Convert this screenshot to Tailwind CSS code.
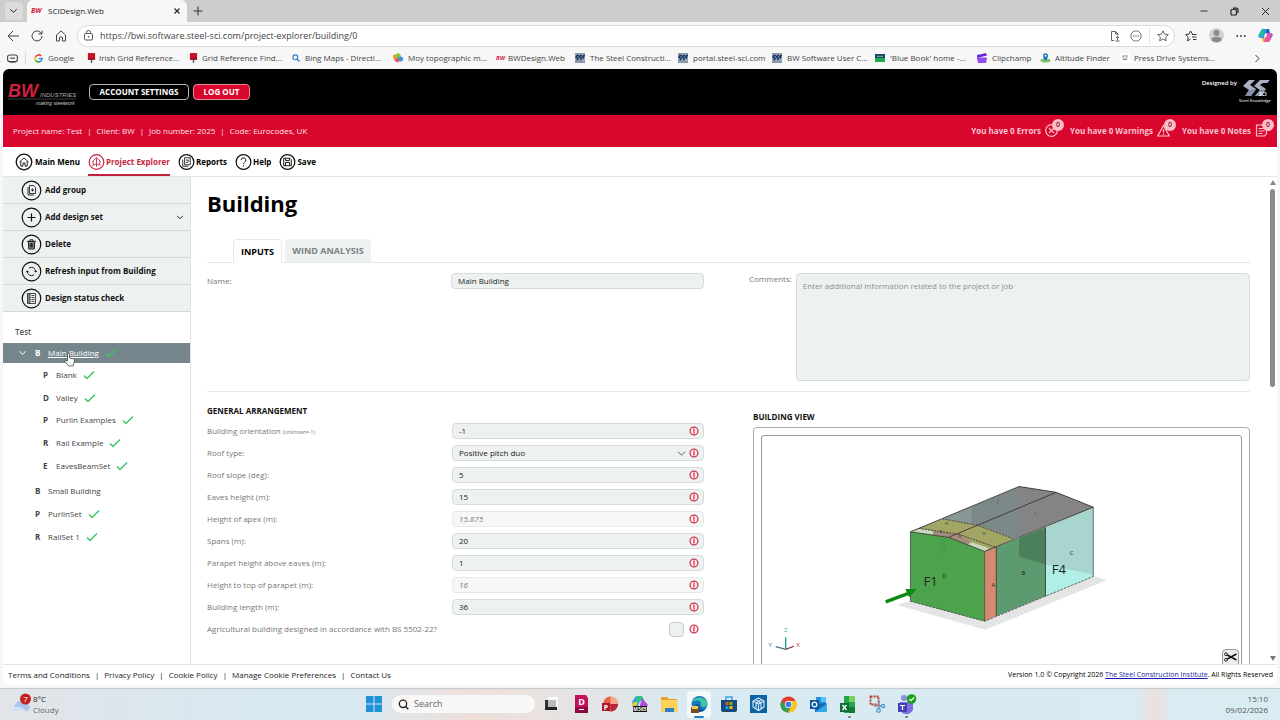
<!DOCTYPE html>
<html lang="en">
<head>
    <meta charset="UTF-8">
    <meta name="viewport" content="width=device-width, initial-scale=1.0">
    <script src="https://cdn.jsdelivr.net/npm/@tailwindcss/browser@4"></script>
    <title>SCIDesign.Web</title>
</head>
<body class="flex flex-col h-screen overflow-hidden bg-[#f7f7f7] font-['Open_Sans','Noto_Sans',sans-serif] text-[8px] leading-3 text-[#222]">

    <!-- Shared icons -->
    <svg class="hidden">
      <symbol id="tick" viewBox="0 0 12 10"><path d="M1 5.5 4 8.5 11 1.5" fill="none" stroke="#3fc463" stroke-width="1.4"/></symbol>
      <symbol id="info" viewBox="0 0 10 10"><circle cx="5" cy="5" r="3.9" fill="#fbeef0" stroke="#cf3850" stroke-width="1.3"/><path d="M5 2.6V7.400" stroke="#cf3850" stroke-width="1.3"/></symbol>
      <symbol id="chev" viewBox="0 0 10 6"><path d="M1.5 1 5 4.6 8.500 1" fill="none" stroke="currentColor" stroke-width="1.1"/></symbol>
      <symbol id="pin" viewBox="0 0 10 11"><path d="M1 0h8v7H1z" fill="#c01622"/><path d="M5 7v4" stroke="#555" stroke-width="1.500"/><path d="M1 6h8v1.500H1z" fill="#8d0d16"/></symbol>
      <symbol id="sci" viewBox="0 0 11 11"><path d="M0 0h11v11H0z" fill="#8c98a8"/><path d="M0 2.500h11v6H0z" fill="#9fb0c2"/><path d="M4.500 3H2L1 4.500 3.500 6 2 8M8 3H6L5 4.500 7 6 6 8M11 3H9.500L8.500 5 10 6" fill="none" stroke="#17315f" stroke-width="1.600"/></symbol>
    </svg>

    <!-- Tab strip -->
    <div class="flex items-stretch h-[22px] shrink-0 bg-[#cdcdcd]">
      <div class="w-[27px] flex items-center justify-center">
        <button aria-label="Tab menu" class="w-[18px] h-[18px] rounded bg-[#dcdcdc] flex items-center justify-center"><svg class="w-[9px] h-[6px]"><use href="#chev"/></svg></button>
      </div>
      <div class="w-[160px] flex items-center rounded-t-md bg-[#f7f7f7] pl-1 pr-[6px]">
        <span class="text-[7px] font-bold italic text-[#cf1c3f] w-[17px]">BW</span>
        <span class="flex-1">SCIDesign.Web</span>
        <button aria-label="Close tab"><svg class="w-2 h-2" viewBox="0 0 8 8"><path d="M1.500 1.500l5 5M6.500 1.500l-5 5" stroke="#222" stroke-width="1.100"/></svg></button>
      </div>
      <button aria-label="New tab" class="w-[22px] flex items-center justify-center"><svg class="w-[10px] h-[10px]" viewBox="0 0 10 10"><path d="M5 .5v9M.5 5h9" stroke="#333" stroke-width="1.100"/></svg></button>
      <div class="flex-1"></div>
      <div class="flex items-center gap-[22px] pr-[10px]">
        <button aria-label="Minimise"><svg class="w-2 h-2" viewBox="0 0 8 8"><path d="M.5 4h7" stroke="#333"/></svg></button>
        <button aria-label="Restore"><svg class="w-[9px] h-[9px]" viewBox="0 0 9 9"><rect x="1" y="2.500" width="5.500" height="5.500" rx="1" fill="none" stroke="#222" stroke-width="1.200"/><path d="M3 1.200h3.500Q8 1.200 8 2.700V6" fill="none" stroke="#222" stroke-width="1.200"/></svg></button>
        <button aria-label="Close"><svg class="w-[9px] h-[9px]" viewBox="0 0 9 9"><path d="M1 1l7 7M8 1l-7 7" stroke="#222"/></svg></button>
      </div>
    </div>

    <!-- Address bar -->
    <div class="flex items-center h-[27px] shrink-0 pl-[7px] pr-[7px] text-[#444]">
      <div class="flex items-center gap-3 w-[70px]">
        <button aria-label="Back"><svg class="w-3 h-3" viewBox="0 0 12 12"><path d="M6 1 1 6l5 5M1 6h11" fill="none" stroke="#444"/></svg></button>
        <button aria-label="Reload"><svg class="w-3 h-3" viewBox="0 0 12 12"><path d="M11 6A5 5 0 1 1 9.300 2.200L11 4M11 .5V4H7.500" fill="none" stroke="#444"/></svg></button>
        <button aria-label="Home"><svg class="w-3 h-3" viewBox="0 0 12 12"><path d="M1.500 5 6 1l4.500 4v6H7.500V7.500q-1.500-1.500-3 0V11h-3z" fill="none" stroke="#444" stroke-linejoin="round"/></svg></button>
      </div>
      <div class="flex flex-1 items-center h-[22px] rounded-full border border-[#dcdcdc] bg-white pl-[6px] pr-[5px]">
        <svg class="w-[9px] h-[11px]" viewBox="0 0 9 11"><rect x=".5" y="3.500" width="8" height="6.500" rx="1.200" fill="none" stroke="#555"/><path d="M2.500 3.500V2.500a2 2 0 0 1 4 0v1" fill="none" stroke="#555"/><circle cx="4.500" cy="6.800" r=".8" fill="#444"/></svg>
        <input aria-label="Address" class="flex-1 ml-[7px] text-[9px] outline-none text-[#444]" value="https://bwi.software.steel-sci.com/project-explorer/building/0">
        <svg class="w-[10px] h-3" viewBox="0 0 10 12"><path d="M4 10.500H1.500V1.500H5.500L8 4V5.500M5.500 1.500V4H8M7.500 6.500v4M6 8l1.500-1.500L9 8M5.500 11h4" fill="none" stroke="#555" stroke-width=".9"/></svg>
        <svg class="w-3 h-3 ml-[10px]" viewBox="0 0 12 12"><circle cx="6" cy="6" r="5.200" fill="none" stroke="#666" stroke-width=".9"/><g fill="#555"><circle cx="3.700" cy="6" r=".7"/><circle cx="6" cy="6" r=".7"/><circle cx="8.300" cy="6" r=".7"/></g></svg>
        <span class="w-px h-4 bg-[#e2e2e2] ml-[7px] mr-[7px]"></span>
        <svg class="w-3 h-3" viewBox="0 0 12 12"><path d="M6 .8 7.600 4.200 11.300 4.600 8.600 7.100 9.300 10.800 6 9 2.700 10.800 3.400 7.100.7 4.600 4.400 4.200z" fill="none" stroke="#555" stroke-width=".9"/></svg>
      </div>
      <div class="flex items-center gap-3 pl-[10px]">
        <svg class="w-3 h-3" viewBox="0 0 12 12"><path d="M7.500 4 5.500 1 4 4.200.7 4.600 3.200 7.100 2.500 10.800 5.500 9.200M7 4.500h4.500M7 7h4.500M8 9.500h3.500" fill="none" stroke="#333"/></svg>
        <svg class="w-[15px] h-[15px]" viewBox="0 0 15 15"><circle cx="7.500" cy="7.500" r="7.500" fill="#d3d0cd"/><circle cx="7.500" cy="5" r="2.900" fill="#8b8886"/><path d="M2.500 12.500q0-3.500 3-3.500h4q3 0 3 3.500-5 3.500-10 0z" fill="#8b8886"/></svg>
        <svg class="w-[10px] h-3" viewBox="0 0 10 12"><g fill="#333"><circle cx="1.200" cy="6" r=".9"/><circle cx="5" cy="6" r=".9"/><circle cx="8.800" cy="6" r=".9"/></g></svg>
        <svg class="w-[15px] h-[15px]" viewBox="0 0 15 15"><path d="M4 1h6L7 10H3Q0 10 .5 7.500z" fill="#2a8fe8"/><path d="M4 1Q6 0 7 3L5 9 1 9Q0 8 1 6z" fill="#22b8a5"/><path d="M11 14H5L8 5h4q3 0 2.500 2.500z" fill="#e8589b"/><path d="M9 1h2l1 4H8z" fill="#2457c5"/><path d="M4 10h3l-1 4q-2 0-2-4z" fill="#f6b23c"/><path d="M11 14 13 5q2 0 1.500 2.500z" fill="#a35be0"/><path d="M7 5.500h2L8 9.500H6z" fill="#fff"/></svg>
      </div>
    </div>

    <!-- Favourites -->
    <div class="flex items-center h-[18px] mb-[2px] shrink-0 pl-[7px] text-[#444] whitespace-nowrap">
      <svg class="w-[11px] h-[9px]" viewBox="0 0 11 9"><rect x=".6" y="1" width="9.800" height="6.500" rx="2" fill="none" stroke="#444" stroke-width="1.100"/><path d="M3 3.500h5v1.500H3z" fill="#777"/><path d="M2.500 8.500h6" stroke="#555" stroke-width=".8"/></svg>
      <span class="w-px h-3 bg-[#d8d8d8] ml-[7px] mr-[8px]"></span>
      <a href="#" class="flex items-center gap-[5px] w-[53px] shrink-0"><svg class="w-[9px] h-[9px]" viewBox="0 0 9 9" fill="none" stroke-width="1.700"><path d="M7.200 2A3.600 3.600 0 0 0 1.500 2.800" stroke="#ea4335"/><path d="M1.500 2.800a3.600 3.600 0 0 0 0 3.400" stroke="#fbbc05"/><path d="M1.500 6.200a3.600 3.600 0 0 0 5.300.9" stroke="#34a853"/><path d="M6.800 7.100A3.600 3.600 0 0 0 8 4.500H4.600" stroke="#4285f4"/></svg>Google</a>
      <a href="#" class="flex items-center gap-[3px] w-[102px] shrink-0"><svg class="w-[9px] h-[10px]"><use href="#pin"/></svg>Irish Grid Reference...</a>
      <a href="#" class="flex items-center gap-1 w-[103px] shrink-0"><svg class="w-[9px] h-[10px]"><use href="#pin"/></svg>Grid Reference Find...</a>
      <a href="#" class="flex items-center gap-[5px] w-[101px] shrink-0"><svg class="w-[8px] h-[8px]" viewBox="0 0 8 8"><circle cx="3.300" cy="3.300" r="2.400" fill="none" stroke="#2b7cd3" stroke-width="1.100"/><path d="M5 5l2.500 2.500" stroke="#2b7cd3" stroke-width="1.200"/></svg>Bing Maps - Directi...</a>
      <a href="#" class="flex items-center gap-[5px] w-[103px] shrink-0"><svg class="w-[10px] h-[10px]" viewBox="0 0 10 10"><path d="M0 5.500a2.500 2.500 0 0 1 2-4L6 5 4 8z" fill="#f39c2c"/><circle cx="5" cy="3" r="2.700" fill="#8ac53e"/><circle cx="7.500" cy="6" r="2.500" fill="#3d8de0"/><path d="M1 6.500 5 5l1 4Q3 10 1 6.500z" fill="#ee4e6c"/></svg>Moy topographic m...</a>
      <a href="#" class="flex items-center gap-[3px] w-[79px] shrink-0"><span class="text-[6px] font-bold italic text-[#cf1c3f]">BW</span>BWDesign.Web</a>
      <a href="#" class="flex items-center gap-[5px] w-[103px] shrink-0"><svg class="w-[10px] h-[10px]"><use href="#sci"/></svg>The Steel Constructi...</a>
      <a href="#" class="flex items-center gap-[5px] w-[94px] shrink-0"><svg class="w-[10px] h-[10px]"><use href="#sci"/></svg>portal.steel-sci.com</a>
      <a href="#" class="flex items-center gap-[5px] w-[103px] shrink-0"><svg class="w-[10px] h-[10px]"><use href="#sci"/></svg>BW Software User C...</a>
      <a href="#" class="flex items-center gap-[5px] w-[102px] shrink-0"><svg class="w-[10px] h-[10px]" viewBox="0 0 10 10"><path d="M0 1h10v8H0z" fill="#174a55"/><path d="M0 5h10v4H0z" fill="#23a94d"/><path d="M2 3.300h6" stroke="#6fb0d8"/></svg>'Blue Book' home -...</a>
      <a href="#" class="flex items-center gap-1 w-[63px] shrink-0"><svg class="w-[11px] h-[10px]" viewBox="0 0 11 10"><path d="M0 2 9 0l1 2.500L0 5z" fill="#6c2bd9"/><path d="M0 4.500h10L9 10H1z" fill="#8f4df0"/></svg>Clipchamp</a>
      <a href="#" class="flex items-center gap-1 w-[80px] shrink-0"><svg class="w-[11px] h-[10px]" viewBox="0 0 11 10"><ellipse cx="5.500" cy="7.500" rx="5" ry="2" fill="#79c36a"/><path d="M3 2.800a2.500 2.500 0 0 1 5 0Q8 5 5.500 8 3 5 3 2.800z" fill="#1d6fb8"/><circle cx="5.500" cy="2.800" r="1" fill="#fff"/></svg>Altitude Finder</a>
      <a href="#" class="flex items-center gap-1 shrink-0"><svg class="w-[10px] h-[10px]" viewBox="0 0 10 10"><path d="M0 0h10v10H0z" fill="#fff"/><path d="M2 3h6M2.500 5h2M5.500 5h2M3 6.500h4" stroke="#888"/></svg>Press Drive Systems...</a>
      <button aria-label="More favourites" class="ml-auto mr-[20px]"><svg class="w-[6px] h-[9px]" viewBox="0 0 6 9"><path d="M1.500 1 5 4.500 1.500 8" fill="none" stroke="#333"/></svg></button>
    </div>

    <!-- Application -->
    <div class="flex flex-col flex-1 min-h-0 mx-[3px] mb-[3px] rounded-md overflow-hidden bg-white">

      <header class="flex h-[46px] shrink-0 items-center bg-black pl-1 pr-1 text-white">
        <svg class="w-[70px] h-[30px]" viewBox="0 0 70 30" font-style="italic">
          <text x="1" y="20" font-size="18" font-weight="800" fill="#d3213f" font-family="Liberation Sans, sans-serif">BW</text>
          <text x="33" y="20" font-size="6" fill="#aaa" font-family="Liberation Sans, sans-serif">INDUSTRIES</text>
          <path d="M1 22h68" stroke="#555" stroke-width=".7"/>
          <text x="29" y="28" font-size="5" fill="#ccc" font-family="Liberation Sans, sans-serif">making steelwork</text>
        </svg>
        <button class="ml-3 h-4 w-[100px] rounded border border-[#bbb] font-bold flex items-center justify-center">ACCOUNT SETTINGS</button>
        <button class="ml-1 h-4 w-[57px] rounded border border-[#e58a9b] bg-[#d9062e] font-bold flex items-center justify-center">LOG OUT</button>
        <div class="ml-auto flex items-start">
          <span class="text-[6px] leading-[8px] font-semibold">Designed by</span>
          <svg class="w-9 h-[26px]" viewBox="0 0 36 26">
            <path d="M18 1h-6L6 7l6 4-4 6h6l5-7-6-4zM33 1H23l-6 6 6 4-5 6h6l5-7-6-4 3-2h4z" fill="#a9afc4"/>
            <path d="M12 11 8 17h6l5-7zM23 11l-5 6h6l5-7z" fill="#858dab"/>
            <text x="22" y="17" font-size="5" font-weight="700" fill="#fff">SCI</text>
            <text x="18" y="23" text-anchor="middle" font-size="4" font-weight="600" fill="#ddd">Steel Knowledge</text>
          </svg>
        </div>
      </header>

      <div class="flex h-8 shrink-0 items-center bg-[#d9062e] pl-[10px] pr-[9px] pb-px text-[#fde3e8]">
        <div class="flex gap-[5px]">
          <span>Project name: Test</span><span>|</span><span>Client: BW</span><span>|</span><span>Job number: 2025</span><span>|</span><span>Code: Eurocodes, UK</span>
        </div>
        <div class="ml-auto flex items-center gap-3 font-bold text-[#fbc3cd]">
          <div class="flex items-center gap-1">You have 0 Errors
            <span class="relative"><svg class="w-[13px] h-[13px]" viewBox="0 0 13 13" fill="none" stroke="#fbc3cd" stroke-width="1.200"><circle cx="6.500" cy="6.500" r="5.800"/><path d="M4 4l5 5M9 4l-5 5"/></svg><span class="absolute -top-[5px] -right-[6px] w-3 h-3 rounded-full bg-[#fcbcc8] text-[7px] text-center font-semibold text-[#8d1029]">0</span></span>
          </div>
          <div class="flex items-center gap-1">You have 0 Warnings
            <span class="relative"><svg class="w-[13px] h-[13px]" viewBox="0 0 13 13" fill="none" stroke="#fbc3cd" stroke-width="1.200"><path d="M6.500 1.500 12.300 12H.7zM6.500 5v3.500M6.500 9.500v1.200"/></svg><span class="absolute -top-[5px] -right-[6px] w-3 h-3 rounded-full bg-[#fcbcc8] text-[7px] text-center font-semibold text-[#8d1029]">0</span></span>
          </div>
          <div class="flex items-center gap-1">You have 0 Notes
            <span class="relative"><svg class="w-[13px] h-[13px]" viewBox="0 0 13 13" fill="none" stroke="#fbc3cd" stroke-width="1.200"><path d="M1.500 1h10v8.500l-2 2.500h-8zM3.500 4.500h5M3.500 7h6M3.500 9.500h4"/></svg><span class="absolute -top-[5px] -right-[6px] w-3 h-3 rounded-full bg-[#fcbcc8] text-[7px] text-center font-semibold text-[#8d1029]">0</span></span>
          </div>
        </div>
      </div>

      <nav class="flex h-[30px] shrink-0 gap-2 border-b border-[#e3e5e5] pl-3 font-bold text-black">
        <a href="#" class="flex items-center gap-[2px]"><svg class="w-[18px] h-[18px]" viewBox="0 0 18 18" fill="none" stroke="#111"><circle cx="9" cy="9" r="7.800" stroke-width="1.300"/><path d="M4.500 9 9 4.800 13.500 9M5.800 8v5.200h2.200V10h2v3.200h2.200V8" stroke-width=".9"/></svg>Main Menu</a>
        <a href="#" class="flex items-center gap-[1px] shadow-[inset_0_-2px_0_#c41f3e] text-[#c41f3e]"><svg class="w-[17px] h-[18px]" viewBox="0 0 18 18" fill="none" stroke="#c41f3e"><circle cx="9" cy="9" r="7.800" stroke-width="1.200"/><path d="M4.500 8.500 9 4.500 13.500 8.500M9 4.500V14M5.500 8v3.500h3.500M12.500 8v3.500H9M4.500 13l2-1.500M13.500 13l-2-1.500" stroke-width=".9"/></svg>Project Explorer</a>
        <a href="#" class="flex items-center gap-[1px]"><svg class="w-[17px] h-[18px]" viewBox="0 0 18 18" fill="none" stroke="#111"><circle cx="9" cy="9" r="7.800" stroke-width="1.300"/><path d="M7 4.500h6v7.500H7zM5 6.500v7h6M8.500 7h3M8.500 9l1 1 2-2.500" stroke-width=".9"/></svg>Reports</a>
        <a href="#" class="flex items-center gap-[1px]"><svg class="w-[17px] h-[18px]" viewBox="0 0 18 18" fill="none" stroke="#111"><circle cx="9" cy="9" r="7.800" stroke-width="1.300"/><path d="M6.500 7a2.500 2.500 0 1 1 3.500 2.300Q9 9.800 9 11.200M9 12.500v1.200"/></svg>Help</a>
        <a href="#" class="flex items-center gap-[1px]"><svg class="w-[17px] h-[18px]" viewBox="0 0 18 18" fill="none" stroke="#111"><circle cx="9" cy="9" r="7.800" stroke-width="1.300"/><path d="M5 5h6.500L13 6.500V13H5zM7 5v2.500h4V5M6.800 13v-3.500h4.400V13"/></svg>Save</a>
      </nav>

      <div class="flex flex-1 min-h-0">
        <!-- Sidebar -->
        <aside class="w-[188px] shrink-0 border-r border-[#dde1e1]">
          <div class="flex flex-col bg-[#edf1f0] font-bold text-[#111]">
            <button class="flex items-center gap-[3px] h-[27px] pl-[18px] border-b border-[#d3d9d9]"><svg class="w-[21px] h-[21px]" viewBox="0 0 21 21" fill="none" stroke="#222"><circle cx="10.500" cy="10.500" r="9.300" stroke="#111" stroke-width="1.200"/><path d="M8.500 5.500h4l2 2v6h-6zM7 7v8h6M11.500 8.500v3M10 10h3" stroke-width=".9"/></svg>Add group</button>
            <button class="flex items-center gap-[3px] h-[27px] pl-[18px] pr-[6px] border-b border-[#d3d9d9]"><svg class="w-[21px] h-[21px]" viewBox="0 0 21 21" fill="none" stroke="#111" stroke-width="1.200"><circle cx="10.500" cy="10.500" r="9.300"/><path d="M10.500 6.500v8M6.500 10.500h8"/></svg>Add design set<svg class="ml-auto w-2 h-[5px]"><use href="#chev"/></svg></button>
            <button class="flex items-center gap-[3px] h-[27px] pl-[18px] border-b border-[#d3d9d9]"><svg class="w-[21px] h-[21px]" viewBox="0 0 21 21" fill="none" stroke="#222"><circle cx="10.500" cy="10.500" r="9.300" stroke="#111" stroke-width="1.200"/><path d="M7.300 7.500h6.400l-.4 7.500H7.700z" fill="#999" stroke-width="1"/><path d="M6 7.300h9M9 7V5.800h3V7M9.200 9v4.500M10.500 9v4.500M11.800 9v4.500" stroke-width="1"/></svg>Delete</button>
            <button class="flex items-center gap-[3px] h-[27px] pl-[18px] border-b border-[#d3d9d9]"><svg class="w-[21px] h-[21px]" viewBox="0 0 21 21" fill="none" stroke="#222"><circle cx="10.500" cy="10.500" r="9.300" stroke="#111" stroke-width="1.200"/><path d="M8 7.200a4.200 4.200 0 0 1 6.700 3.800M13.300 9.800l1.400 1.400 1.400-1.400M13 13.800a4.200 4.200 0 0 1-6.700-3.800M4.900 11.200l1.400-1.400 1.400 1.400"/></svg>Refresh input from Building</button>
            <button class="flex items-center gap-[3px] h-[27px] pl-[18px] border-b border-[#d3d9d9]"><svg class="w-[21px] h-[21px]" viewBox="0 0 21 21" fill="none" stroke="#222"><circle cx="10.500" cy="10.500" r="9.300" stroke="#111" stroke-width="1.200"/><path d="M6.500 5.500h2.500v10H6.500z" fill="#888" stroke-width=".8"/><path d="M9 5.500h5.500v10H9M10.500 7.500h3M10.500 9.500h3M10.500 11.500h3M10.500 13.500h3" stroke-width=".8"/></svg>Design status check</button>
          </div>

          <p class="mt-[14px] mb-[5px] pl-3 font-semibold text-[#555]">Test</p>
          <div class="relative flex items-center h-5 bg-[#75878c] pl-[15px] pb-px text-white">
            <svg class="w-[9px] h-[6px]"><use href="#chev"/></svg>
            <b class="ml-2 w-[13px]">B</b><a href="#" class="underline">Main Building</a><svg class="ml-[6px] w-3 h-[10px]"><use href="#tick"/></svg>
            <svg class="absolute left-[61px] top-[9px] w-[11px] h-[15px] z-10" viewBox="0 0 11 15"><path d="M3.500 9V2q0-1 1-1t1 1v4l4 .8q1 .3 1 1.300L10 11l-1 3H4.500L1 9.500q-.5-1 .5-1.300z" fill="#fff" stroke="#333" stroke-width=".7"/></svg>
          </div>
          <ul class="mt-px grid auto-rows-fr h-[113px] pl-[40px] text-[#444]">
            <li class="flex items-center"><b class="w-[13px]">P</b>Blank<svg class="ml-[6px] w-3 h-[10px]"><use href="#tick"/></svg></li>
            <li class="flex items-center"><b class="w-[13px]">D</b>Valley<svg class="ml-[6px] w-3 h-[10px]"><use href="#tick"/></svg></li>
            <li class="flex items-center"><b class="w-[13px]">P</b>Purlin Examples<svg class="ml-[6px] w-3 h-[10px]"><use href="#tick"/></svg></li>
            <li class="flex items-center"><b class="w-[13px]">R</b>Rail Example<svg class="ml-[6px] w-3 h-[10px]"><use href="#tick"/></svg></li>
            <li class="flex items-center"><b class="w-[13px]">E</b>EavesBeamSet<svg class="ml-[6px] w-3 h-[10px]"><use href="#tick"/></svg></li>
          </ul>
          <ul class="mt-[3px] grid auto-rows-fr h-[68px] pl-[32px] text-[#444]">
            <li class="flex items-center"><b class="w-[13px]">B</b>Small Building</li>
            <li class="flex items-center"><b class="w-[13px]">P</b>PurlinSet<svg class="ml-[6px] w-3 h-[10px]"><use href="#tick"/></svg></li>
            <li class="flex items-center"><b class="w-[13px]">R</b>RailSet 1<svg class="ml-[6px] w-3 h-[10px]"><use href="#tick"/></svg></li>
          </ul>
        </aside>

        <!-- Content -->
        <main class="flex-1 min-w-0 overflow-hidden pl-4 pr-[18px] text-[#777]">
          <h1 class="mt-3 text-[22px] leading-7 font-bold text-black">Building</h1>
          <div class="mt-[22px] flex gap-[3px] h-6 border-b border-[#e4e8e8] pl-[26px] text-[9px] font-bold">
            <button class="h-6 w-[49px] rounded-t border border-b-0 border-[#e4e8e8] bg-white text-black">INPUTS</button>
            <button class="w-[86px] rounded-t bg-[#edf1f0] text-[#7a8284]">WIND ANALYSIS</button>
          </div>

          <div class="mt-[10px] grid grid-cols-[497fr_501fr] gap-[45px]">
            <div class="flex items-center h-4">
              <label for="name" class="w-[244px]">Name:</label>
              <input id="name" value="Main Building" class="flex-1 min-w-0 h-4 rounded border border-[#d6dcdc] bg-[#edf1f0] px-[6px] pb-px text-[#222]">
            </div>
            <div class="flex gap-1">
              <label for="comments">Comments:</label>
              <textarea id="comments" placeholder="Enter additional information related to the project or job" class="flex-1 h-[108px] resize-none rounded border border-[#d6dcdc] bg-[#edf1f0] p-[6px] placeholder-[#8a9090]"></textarea>
            </div>
          </div>

          <div class="mt-[10px] border-t border-[#e4e8e8] grid grid-cols-2 gap-[49px]">
            <div class="pt-[13px]">
              <h2 class="mb-[6px] font-bold text-[#111]">GENERAL ARRANGEMENT</h2>
              <div class="flex flex-col gap-[6px] text-[#222]">
                <div class="relative flex items-center"><label for="orient" class="w-[245px] text-[#777]">Building orientation <span class="text-[5px]">(unknown=-1)</span></label><input id="orient" value="-1" class="flex-1 min-w-0 h-4 rounded border border-[#d6dcdc] bg-[#edf1f0] px-[6px] pb-px"><svg class="absolute right-[5px] w-[10px] h-[10px]"><use href="#info"/></svg></div>
                <div class="relative flex items-center"><label for="roof" class="w-[245px] text-[#777]">Roof type:</label><select id="roof" class="flex-1 min-w-0 h-4 appearance-none rounded border border-[#d6dcdc] bg-[#edf1f0] px-[6px]"><option>Positive pitch duo</option></select><svg class="absolute right-[18px] w-[9px] h-[5px] text-[#555]" viewBox="0 0 9 5"><path d="M1 .7 4.500 4.200 8 .7" fill="none" stroke="currentColor" stroke-width=".9"/></svg><svg class="absolute right-[5px] w-[10px] h-[10px]"><use href="#info"/></svg></div>
                <div class="relative flex items-center"><label for="slope" class="w-[245px] text-[#777]">Roof slope (deg):</label><input id="slope" value="5" class="flex-1 min-w-0 h-4 rounded border border-[#d6dcdc] bg-[#edf1f0] px-[6px] pb-px"><svg class="absolute right-[5px] w-[10px] h-[10px]"><use href="#info"/></svg></div>
                <div class="relative flex items-center"><label for="eaves" class="w-[245px] text-[#777]">Eaves height (m):</label><input id="eaves" value="15" class="flex-1 min-w-0 h-4 rounded border border-[#d6dcdc] bg-[#edf1f0] px-[6px] pb-px"><svg class="absolute right-[5px] w-[10px] h-[10px]"><use href="#info"/></svg></div>
                <div class="relative flex items-center"><label for="apex" class="w-[245px] text-[#777]">Height of apex (m):</label><input id="apex" value="15.875" disabled class="flex-1 min-w-0 h-4 rounded border border-[#e6eaea] bg-[#f5f8f7] px-[6px] pb-px italic text-[#777]"><svg class="absolute right-[5px] w-[10px] h-[10px]"><use href="#info"/></svg></div>
                <div class="relative flex items-center"><label for="spans" class="w-[245px] text-[#777]">Spans (m):</label><input id="spans" value="20" class="flex-1 min-w-0 h-4 rounded border border-[#d6dcdc] bg-[#edf1f0] px-[6px] pb-px"><svg class="absolute right-[5px] w-[10px] h-[10px]"><use href="#info"/></svg></div>
                <div class="relative flex items-center"><label for="parapet" class="w-[245px] text-[#777]">Parapet height above eaves (m):</label><input id="parapet" value="1" class="flex-1 min-w-0 h-4 rounded border border-[#d6dcdc] bg-[#edf1f0] px-[6px] pb-px"><svg class="absolute right-[5px] w-[10px] h-[10px]"><use href="#info"/></svg></div>
                <div class="relative flex items-center"><label for="ptop" class="w-[245px] text-[#777]">Height to top of parapet (m):</label><input id="ptop" value="16" disabled class="flex-1 min-w-0 h-4 rounded border border-[#e6eaea] bg-[#f5f8f7] px-[6px] pb-px italic text-[#777]"><svg class="absolute right-[5px] w-[10px] h-[10px]"><use href="#info"/></svg></div>
                <div class="relative flex items-center"><label for="length" class="w-[245px] text-[#777]">Building length (m):</label><input id="length" value="36" class="flex-1 min-w-0 h-4 rounded border border-[#d6dcdc] bg-[#edf1f0] px-[6px] pb-px"><svg class="absolute right-[5px] w-[10px] h-[10px]"><use href="#info"/></svg></div>
                <div class="relative flex items-center h-4"><label for="agri" class="text-[#777]">Agricultural building designed in accordance with BS 5502-22?</label><input id="agri" type="checkbox" class="ml-auto mr-5 w-[15px] h-[15px] appearance-none rounded border border-[#c5cccc] bg-[#edf1f0]"><svg class="absolute right-[5px] w-[10px] h-[10px]"><use href="#info"/></svg></div>
              </div>
            </div>

            <div class="pt-[19px]">
              <h2 class="mb-1 font-bold text-[#111]">BUILDING VIEW</h2>
              <div class="relative rounded border border-[#aaa] p-[7px]">
                <div class="h-[320px] rounded-[3px] border border-[#999] overflow-hidden">
                  <svg class="block w-full" viewBox="62 111 1394 689" stroke-linejoin="round">
                    <defs><pattern id="hatch" width="8" height="8" patternUnits="userSpaceOnUse"><path d="M0 0h8v8H0z" fill="#f1f1f1"/><path d="M0 0l8 8M8 0 0 8" stroke="#bbb" stroke-width="1"/></pattern></defs>
                    <path d="M455 603 494 590 710 640 1026 518 1065 531 712 675z" fill="url(#hatch)"/>
                    <!-- walls -->
                    <path d="M494 390 605 406 710 447V650L494 592z" fill="#4da34c"/>
                    <path d="M710 447 744 434V635L710 650z" fill="#d58a70"/>
                    <path d="M744 434 887 377V577L744 635z" fill="#5c9b70"/>
                    <path d="M810 408 887 377V485L810 462z" fill="#4c805a"/>
                    <path d="M887 377 1026 318V520L887 577z" fill="#b0efe5"/>
                    <path d="M887 377 1026 318V514L887 485z" fill="#a9d5cf"/>
                    <!-- roof -->
                    <path d="M587 352 810 258 918 275 1026 318 795 411 690 371z" fill="#7d8988"/>
                    <path d="M810 258 918 275 1026 318 810 405z" fill="#858383"/>
                    <path d="M587 352 672 316V366z" fill="#8a9795"/>
                    <path d="M494 388 587 352 690 371 795 411 744 434 710 447 605 405z" fill="#a3a565"/>
                    <path d="M494 390 518 380 560 387 560 399zM660 427 672 420 722 438 710 447z" fill="#c9d9bd"/>
                    <path d="M560 387 635 397 672 418 660 427 605 406 560 399z" fill="#a58c7c"/>
                    <g fill="none" stroke="#333" stroke-width="2.500">
                      <path d="M494 390 810 258 918 275 1026 318 710 447 605 406z"/>
                      <path d="M605 406 918 275M744 434V635M887 377V577"/>
                      <path d="M518 380 635 397 742 435M587 352 690 371 795 411" stroke-dasharray="6 3"/>
                      <path d="M494 390V592M710 447V650M1026 318V520" stroke-width="2"/>
                      <path d="M494 592 710 650 1026 520" stroke-width="2" stroke-dasharray="8 3"/>
                    </g>
                    <path d="M422 594 490 568" stroke="#0b8a10" stroke-width="10"/>
                    <path d="M479 556 513 556 490 580z" fill="#0b8a10"/>
                    <g fill="#222" text-anchor="middle" font-size="17">
                      <text x="553" y="547" font-size="38">F1</text>
                      <text x="926" y="512" font-size="38">F4</text>
                      <text x="593" y="524">D</text><text x="735" y="551">A</text><text x="823" y="515">B</text><text x="963" y="458">C</text>
                      <text x="749" y="307" font-size="12">J</text><text x="857" y="337" font-size="12">I</text>
                      <text x="600" y="369" font-size="12">H</text><text x="708" y="399" font-size="12">H</text>
                      <text x="583" y="392" font-size="12">G</text><text x="638" y="407" font-size="12">G</text>
                    </g>
                    <g fill="none" stroke="#338060" opacity=".6" stroke-width="2"><path d="M584 409l10 10-10 8M583 436h10v12h-10"/></g>
                    <!-- axes -->
                    <path d="M131 730V697" stroke="#2f9c92" stroke-width="4"/>
                    <path d="M131 732 102 724" stroke="#3c6f86" stroke-width="3.500"/>
                    <path d="M131 732 155 723" stroke="#8a3040" stroke-width="3.500"/>
                    <g text-anchor="middle" font-size="18"><text x="131" y="682" fill="#4fa79f">Z</text><text x="86" y="725" fill="#46748c">Y</text><text x="167" y="724" fill="#c03040">X</text></g>
                  </svg>
                </div>
                <button aria-label="Section cut" class="absolute top-[221px] right-[10px] w-[17px] h-[18px] rounded-sm border border-[#999] bg-[#eee] flex items-start justify-center pt-[2px]"><svg class="w-[13px] h-[10px]" viewBox="0 0 13 10" fill="none" stroke="#111"><circle cx="2" cy="2.200" r="1.400" stroke-width=".9"/><circle cx="2" cy="7.800" r="1.400" stroke-width=".9"/><path d="M3.300 3 12.500 8M3.300 7 12.500 2" stroke-width="1.500"/></svg></button>
              </div>
            </div>
          </div>
        </main>

        <!-- Scroll track -->
        <div class="flex w-[9px] shrink-0 flex-col items-center py-[3px]">
          <svg class="w-[6px] h-[5px]" viewBox="0 0 6 5"><path d="M3 0 6 5H0z" fill="#888"/></svg>
          <div class="mt-1 w-[5px] h-[198px] rounded-full bg-[#8a8a8a]"></div>
          <svg class="mt-auto w-[6px] h-[5px]" viewBox="0 0 6 5"><path d="M3 5 6 0H0z" fill="#777"/></svg>
        </div>
      </div>

      <footer class="flex items-center h-[21px] shrink-0 border-t border-[#e0e3e3] bg-white pl-[5px] pr-1">
        <div class="flex gap-[5px]">
          <a href="#">Terms and Conditions</a><span>|</span><a href="#">Privacy Policy</a><span>|</span><a href="#">Cookie Policy</a><span>|</span><a href="#">Manage Cookie Preferences</a><span>|</span><a href="#">Contact Us</a>
        </div>
        <p class="ml-auto text-[7px] text-black">Version 1.0 © Copyright 2026 <a href="#" class="text-[#1a1aa8] underline">The Steel Construction Institute</a>. All Rights Reserved</p>
      </footer>
    </div>

    <!-- Taskbar -->
    <div class="flex items-center h-8 shrink-0 border-t border-[#c4cbd0] bg-linear-to-r from-[#e2e4e8] from-0% via-[#d8e8f1] via-20% to-[#d9ecf2]">
      <div class="flex flex-1 items-center gap-[2px] pl-3 pb-[2px] leading-[11px] text-[#444]">
        <svg class="w-[19px] h-[22px]" viewBox="0 0 19 22"><path d="M4 18a4 4 0 0 1 0-7 5 5 0 0 1 9-1 4 4 0 0 1 1 8z" fill="#a9c5ee"/><path d="M3 18q-3-1-1.500-4Q8 12 14 18z" fill="#d3e2f8"/><circle cx="13.500" cy="6" r="5.500" fill="#c4201f"/><text x="13.500" y="8.800" text-anchor="middle" font-size="8" fill="#fff">7</text></svg>
        <div><p class="text-[#222]">8°C</p><p class="text-[#666]">Cloudy</p></div>
      </div>
      <div class="flex items-center h-full pl-2 pb-px bg-linear-to-r from-[#f0dfd9]/0 from-0% via-[#f0dfd9] via-20% to-[#f0dfd9]/0 to-60%">
        <button aria-label="Start"><svg class="w-4 h-[18px]" viewBox="0 0 16 18"><path d="M0 1h7.500v7.500H0zM8.500 1H16v7.500H8.500zM0 9.500h7.500V17H0zM8.500 9.500H16V17H8.500z" fill="#1e93d6"/></svg></button>
        <div class="ml-[9px] flex items-center w-[145px] h-5 rounded-full border border-[#e3e3e3] bg-[#faf8f7] pl-[6px]">
          <svg class="w-[11px] h-[11px]" viewBox="0 0 11 11"><circle cx="5" cy="4.800" r="3.700" fill="none" stroke="#222" stroke-width="1.300"/><path d="M7.600 7.500 10.300 10.300" stroke="#222" stroke-width="1.400"/></svg>
          <input aria-label="Search" placeholder="Search" class="ml-[5px] w-24 text-[9px] placeholder-[#666] outline-none">
        </div>
        <div class="grid grid-cols-13 w-[386px] h-full items-center justify-items-center">
          <svg class="w-4 h-4" viewBox="0 0 16 16"><path d="M5 1h10v11H5z" fill="#fafafa"/><path d="M2 4h3v10H2z" fill="#333"/><path d="M5 4h8v7H5z" fill="#bbb"/><path d="M2 11h12v3H2z" fill="#222"/></svg>
          <svg class="w-4 h-[18px]" viewBox="0 0 16 18"><path d="M2 0h11l2 3v15H2z" fill="#c4105a"/><path d="M2 12h13v6H2z" fill="#8c0a3e"/><text x="8.500" y="10" text-anchor="middle" font-size="9" font-weight="700" fill="#fff">D</text><path d="M6 14.500h5" stroke="#fff"/></svg>
          <svg class="w-4 h-4" viewBox="0 0 16 16"><circle cx="8.500" cy="8" r="7.500" fill="#e8623f"/><path d="M8.500.5A7.500 7.500 0 0 1 16 8H8.500z" fill="#f7a58c"/><path d="M8.500 15.500A7.500 7.500 0 0 0 16 8H8.500z" fill="#b8253a"/><path d="M0 7h8v8H0z" fill="#a8182e"/><text x="4" y="14" text-anchor="middle" font-size="7" font-weight="700" fill="#fff">P</text></svg>
          <svg class="w-[18px] h-[18px]" viewBox="0 0 18 18"><path d="M1 7 5 1h6L7 11H2z" fill="#2a9be8"/><path d="M5 1h6l2 4-8 3z" fill="#34c28b"/><path d="M11 3l6 7-3 4H8z" fill="#b44be0"/><path d="M2 7h5l-2 5H1z" fill="#e8c932"/><path d="M2 11h14v6H2z" fill="#111"/><text x="9" y="16" text-anchor="middle" font-size="5" font-weight="700" fill="#fff">M365</text></svg>
          <svg class="w-[17px] h-[17px]" viewBox="0 0 17 17"><path d="M0 1h6l2 2h8v12H0z" fill="#e3a52b"/><path d="M0 4h16.500v12H0z" fill="#fbd257"/><path d="M4 12h9v4H4z" fill="#2d7ec4"/></svg>
          <div class="relative flex items-center justify-center w-6 h-[27px] rounded bg-white/70"><svg class="w-[17px] h-[17px]" viewBox="0 0 17 17"><circle cx="8.500" cy="8" r="8" fill="#1a74c8"/><path d="M1 7a8 8 0 0 1 15.500 1.500Q16 11 12 11q-3-1-2-3 0-4-4.500-3.500Q2 5 1 7z" fill="#3dc7a0"/><path d="M8 8q-1 3 2 5t5 0q-4 4-9 2-3-3-1-7z" fill="#0d4f96"/><path d="M0 11h8v6H0z" fill="#7b4a1e"/><path d="M1 10h6v3H1z" fill="#f3c84b"/></svg><span class="absolute bottom-0 w-[10px] h-[2px] rounded bg-[#2c7cb8]"></span></div>
          <svg class="w-4 h-4" viewBox="0 0 16 16"><path d="M5 4V1h6v3" fill="none" stroke="#3ba5e0" stroke-width="1.500"/><path d="M0 4h16v10q0 2-2 2H2q-2 0-2-2z" fill="#174a7c"/><path d="M4.500 6h3v3h-3z" fill="#f25022"/><path d="M8.500 6h3v3h-3z" fill="#7fba00"/><path d="M4.500 10h3v3h-3z" fill="#00a4ef"/><path d="M8.500 10h3v3h-3z" fill="#ffb900"/></svg>
          <svg class="w-[17px] h-[18px]" viewBox="0 0 17 18"><path d="M0 0h17v18H0z" fill="#0d64a4"/><path d="M8.500 3 14 6v6l-5.500 3.500L3 12V6zM3 6l5.500 3L14 6M8.500 9v6.500M5.500 4.500 11 8v6M11.500 4.500 6 8v6" fill="none" stroke="#d7ecfa" stroke-width="1.100"/></svg>
          <svg class="w-[17px] h-[17px]" viewBox="0 0 17 17"><circle cx="8.500" cy="8.500" r="8" fill="#e33b2e"/><path d="M1.500 4.500A8 8 0 0 0 8 16.500L11.500 10 5 10z" fill="#2da04e"/><path d="M16 5H9l3 5-4 6.500A8 8 0 0 0 16 5z" fill="#fbc916"/><circle cx="8.500" cy="8.500" r="3.700" fill="#fff"/><circle cx="8.500" cy="8.500" r="2.900" fill="#3c7de8"/></svg>
          <svg class="w-[17px] h-[17px]" viewBox="0 0 17 17"><path d="M6 1h10v8H6z" fill="#2490dc"/><path d="M11 1h5v5h-5z" fill="#58c0f5"/><path d="M5 8l11.500-1V16H5z" fill="#1569b8"/><path d="M5 16 16.500 8v8z" fill="#35a8ea"/><path d="M0 4h9v9H0z" fill="#0b58a6"/><circle cx="4.500" cy="8.500" r="2.300" fill="none" stroke="#fff" stroke-width="1.300"/></svg>
          <div class="relative flex items-center h-[27px]"><svg class="w-4 h-[17px]" viewBox="0 0 16 17"><path d="M4 0h11v17H4z" fill="#27a34b"/><path d="M9 0h6v6H9z" fill="#7ad15d"/><path d="M9 11h6v6H9z" fill="#157a38"/><path d="M0 7h9v9H0z" fill="#0e6b34"/><path d="M2.500 9 6.500 14M6.500 9l-4 5" stroke="#fff" stroke-width="1.300"/></svg><span class="absolute bottom-0 left-1/2 w-[3px] h-[2px] rounded bg-[#777]"></span></div>
          <svg class="w-4 h-[18px]" viewBox="0 0 16 18" fill="none"><path d="M1.500 1.500h8v8h-8z" stroke="#b8402c" stroke-width="1.800" stroke-dasharray="2 1"/><path d="M10 5v9M5 11h8" stroke="#889" stroke-width="1.300"/><circle cx="9.500" cy="15.500" r="1.800" stroke="#3b9bd0" stroke-width="1.300"/><circle cx="14" cy="11" r="1.600" stroke="#3b9bd0" stroke-width="1.300"/></svg>
          <div class="relative flex items-center h-[27px]"><svg class="w-5 h-[21px]" viewBox="0 0 20 21"><circle cx="7" cy="4" r="3" fill="#8d8ee6"/><path d="M3 8h13v8q-3 5-8 4-5-1-5-6z" fill="#7a6ee0"/><path d="M1 9h9v9H1z" fill="#4a3fb4"/><path d="M3 11.500h5M5.500 11.500V16" stroke="#fff" stroke-width="1.200"/><circle cx="14.500" cy="5" r="4.800" fill="#17a21d"/><path d="M12.300 5l1.700 1.700 3-3.200" fill="none" stroke="#fff" stroke-width="1.100"/></svg><span class="absolute bottom-0 left-2 w-[3px] h-[2px] rounded bg-[#777]"></span></div>
        </div>
      </div>
      <div class="flex-1 h-full flex flex-col justify-center items-end pr-3 pb-[2px] leading-[11px] text-[#555] bg-linear-to-r from-[#ecdfde]/0 from-60% via-[#ecdfde] via-65% to-[#ecdfde]/0 to-70%">
        <span>15:10</span><span>09/02/2026</span>
      </div>
    </div>
</body>
</html>
